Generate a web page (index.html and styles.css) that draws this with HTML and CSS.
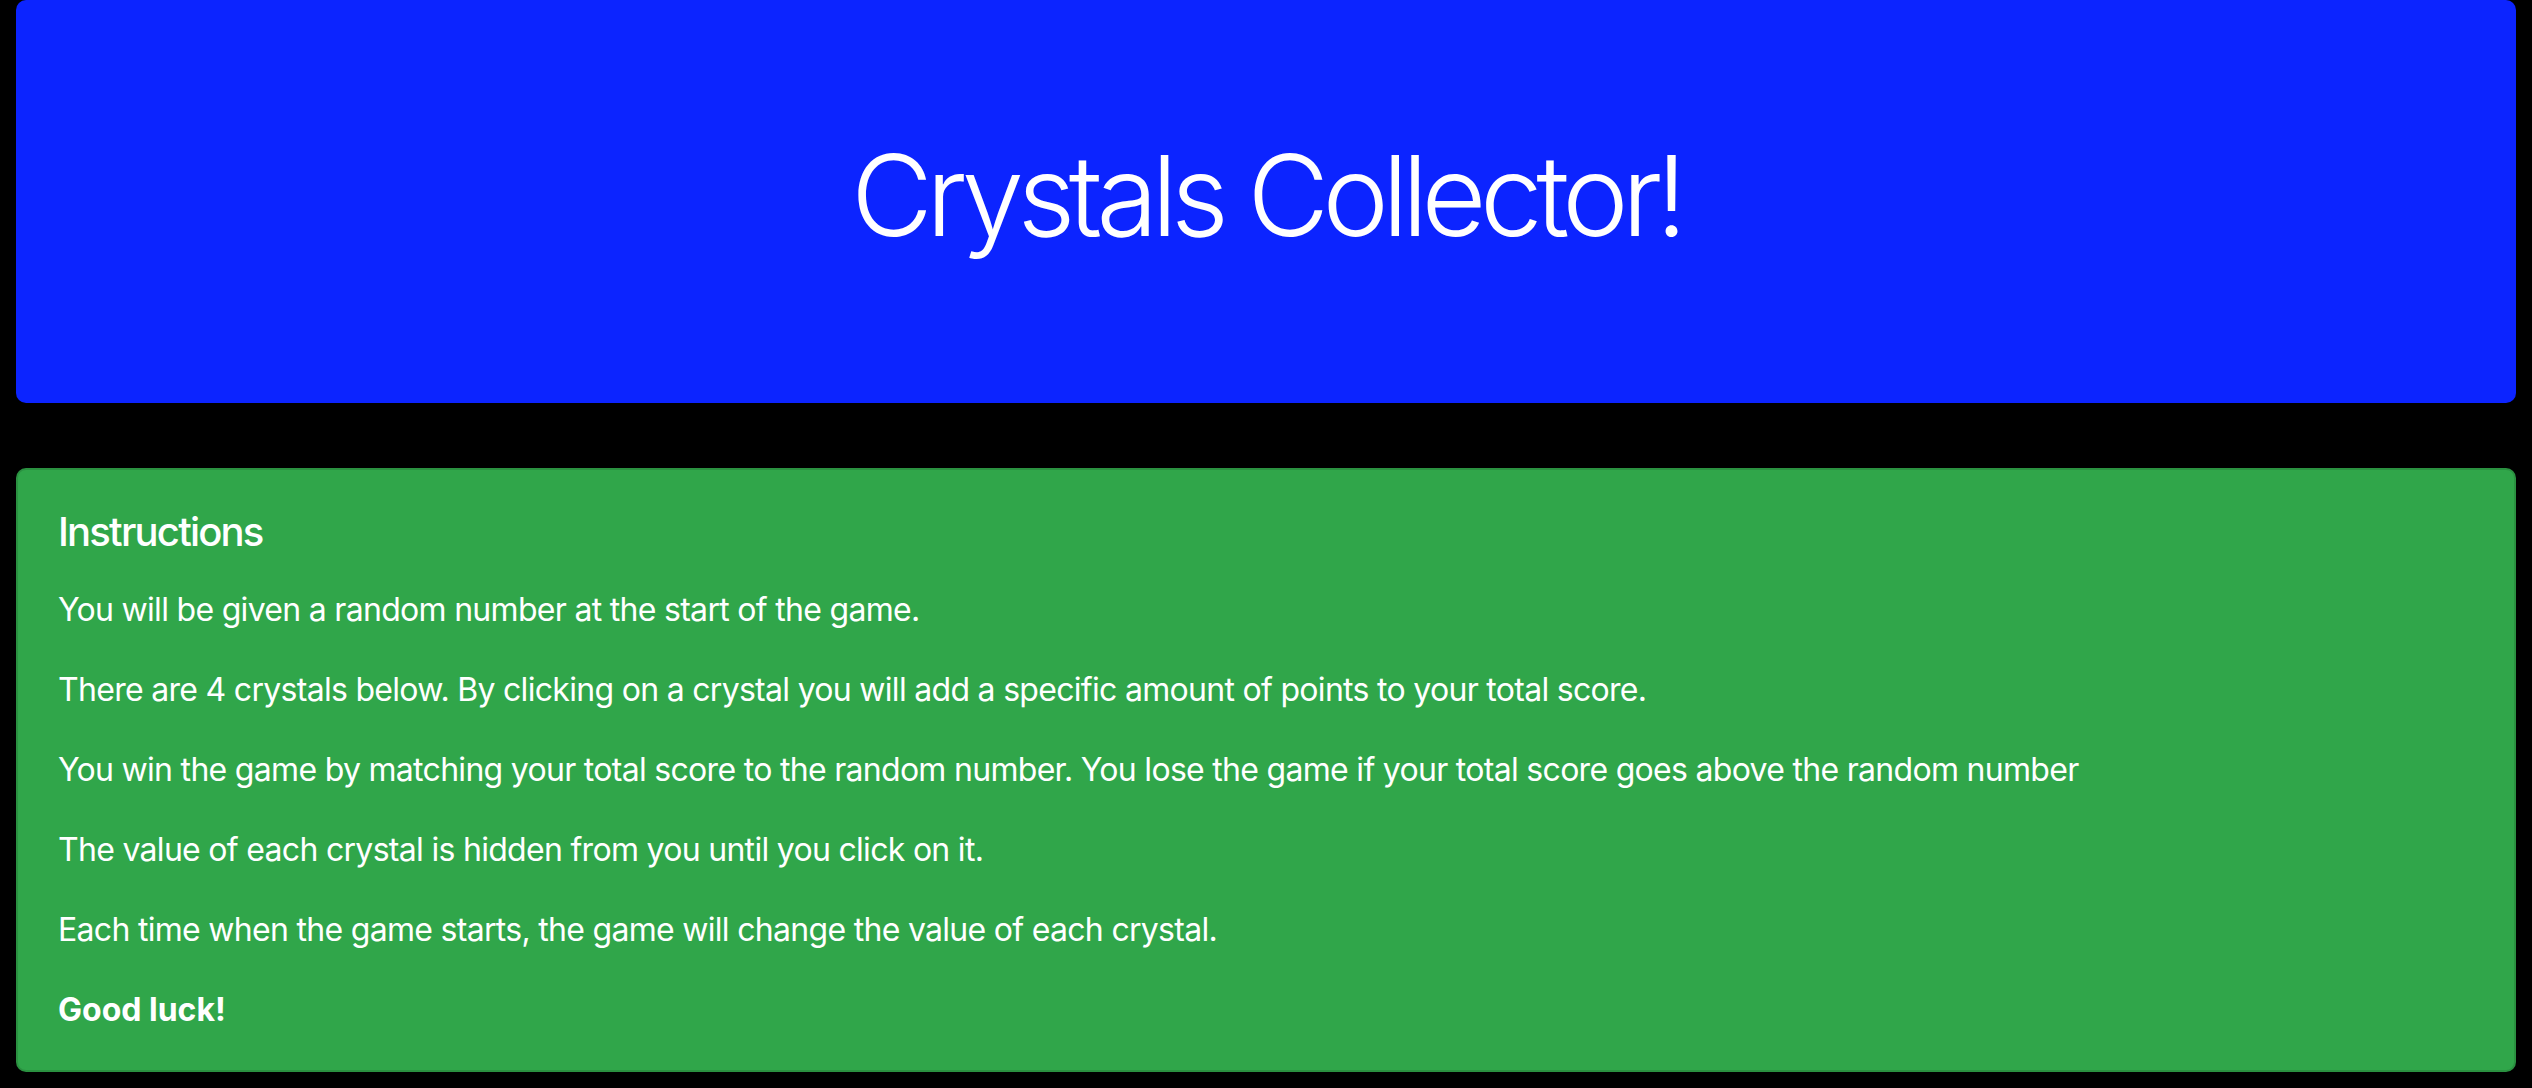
FILE: index.html
```html
<!DOCTYPE html>
<html lang="en">
<head>
<meta charset="utf-8">
<title>Crystals Collector!</title>
<link rel="stylesheet" href="styles.css">
</head>
<body>
<div class="page">
  <header class="jumbotron">
    <h1 class="title">Crystals Collector!</h1>
  </header>
  <section class="card">
    <h5 class="card-title">Instructions</h5>
    <p>You will be given a random number at the start of the game.</p>
    <p>There are 4 crystals below. By clicking on a crystal you will add a specific amount of points to your total score.</p>
    <p>You win the game by matching your total score to the random number. You lose the game if your total score goes above the random number</p>
    <p>The value of each crystal is hidden from you until you click on it.</p>
    <p>Each time when the game starts, the game will change the value of each crystal.</p>
    <p class="last"><strong>Good luck!</strong></p>
  </section>
</div>
</body>
</html>
```
FILE: styles.css
```css
html, body {
  margin: 0;
  padding: 0;
  background: #000;
}
body {
  font-family: Inter, "Noto Sans", "Liberation Sans", sans-serif;
  color: #fff;
  font-size: 32px;
  line-height: 1.5;
}
.page {
  padding: 0 16px;
}
.jumbotron {
  background: rgb(12, 36, 255);
  border-radius: 10px;
  padding: 128px 64px 125px;
  margin-bottom: 65px;
  text-align: center;
}
.title {
  margin: 0 0 16px;
  font-size: 112px;
  font-weight: 300;
  line-height: 134px;
  letter-spacing: -6.5px;
}
.card {
  background: rgb(48, 166, 74);
  border: 2px solid rgba(0, 0, 0, 0.125);
  border-radius: 10px;
  padding: 38px 40px 36px;
}
.card-title {
  margin: 0 0 30px;
  font-size: 40px;
  font-weight: 500;
  line-height: 48px;
  letter-spacing: -1.8px;
}
.card p {
  margin: 0 0 32px;
  letter-spacing: -0.7px;
}
.card p.last {
  margin-bottom: 0;
}
strong {
  font-weight: 700;
  letter-spacing: 0;
}
```
